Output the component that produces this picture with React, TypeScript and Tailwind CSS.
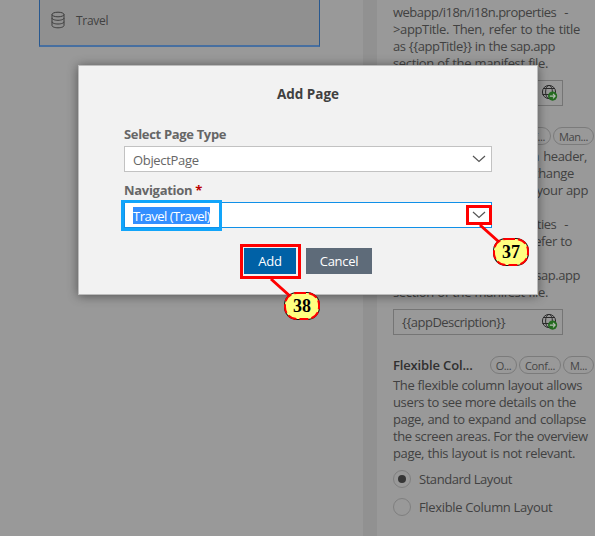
import React from "react";

function Line({ children, w }: { children: React.ReactNode; w: string }) {
  return <div className={"h-[17px] whitespace-nowrap [text-align-last:justify] " + w}>{children}</div>;
}

function Globe() {
  return (
    <svg className="block h-[18px] w-[18px] shrink-0" viewBox="0 0 18 18" fill="none">
      <g stroke="#2b2b2b" strokeWidth="1">
        <circle cx="8" cy="8" r="6.6" />
        <ellipse cx="8" cy="8" rx="3.4" ry="6.6" />
        <path d="M2.5 4.5h11M1.5 10.5h13" />
      </g>
      <circle cx="11.6" cy="12.1" r="4.6" fill="#246b20" />
      <path d="M8.8 12.1h5.2M12 9.9l2.2 2.2-2.2 2.2" stroke="#b5bdb4" strokeWidth="1.1" />
    </svg>
  );
}

function Chip({ children, w }: { children: React.ReactNode; w: string }) {
  return (
    <span className={"flex h-[18px] items-center justify-center rounded-full border border-[#7b7b7b] pt-px text-[11px] leading-none tracking-[-0.4px] text-[#454545] " + w}>
      {children}
    </span>
  );
}

function Chevron() {
  return (
    <svg className="h-[8px] w-[14px] shrink-0" viewBox="0 0 14 8" fill="none">
      <path d="M1 1l6 5.5L13 1" stroke="#555" strokeWidth="1.2" />
    </svg>
  );
}

function Radio({ label, track, on }: { label: string; track: string; on?: boolean }) {
  return (
    <div className="flex h-[28px] items-center gap-[8px]">
      <span className="flex h-[18px] w-[18px] items-center justify-center rounded-full border border-[#7f7f7f]">
        {on && <span className="h-[8px] w-[8px] rounded-full bg-[#363636]" />}
      </span>
      <span className={track}>{label}</span>
    </div>
  );
}

export default function App() {
  return (
    <div className="relative flex h-[536px] w-[595px] overflow-hidden bg-[#999999] text-[13px] leading-[17px] tracking-[-0.15px] text-[#414141] [font-family:'Open_Sans','Noto_Sans',sans-serif]">
      <div className="w-[363px] shrink-0 pl-[39px]">
        <div className="flex h-[47px] w-[281px] items-start border-b-2 border-l border-r border-b-[#476fa0] border-l-[#28588f] border-r-[#28588f] bg-[#909090] pl-[11px] pt-[11px]">
          <svg className="h-[18px] w-[14px]" viewBox="0 0 14 18" fill="none" stroke="#3d3d3d" strokeWidth="1">
            <ellipse cx="7" cy="3.5" rx="6" ry="2.3" />
            <path d="M1 3.5v11c0 1.3 2.7 2.3 6 2.3s6-1 6-2.3v-11M1 7c0 1.3 2.7 2.3 6 2.3s6-1 6-2.3M1 10.7c0 1.3 2.7 2.3 6 2.3s6-1 6-2.3" />
          </svg>
          <span className="ml-[11px] mt-px text-[12px] tracking-[-0.3px]">Travel</span>
        </div>
      </div>
      <div className="w-[14px] shrink-0 bg-[#919191]" />
      <div className="w-[218px] shrink-0 pl-[16px] pt-[4px]">
        <Line w="w-[175px] tracking-[-0.5px]">webapp/i18n/i18n.properties -</Line>
        <Line w="w-[187px] tracking-[-0.36px]">&gt;appTitle. Then, refer to the title</Line>
        <Line w="w-[162px] tracking-[-0.46px]">as {"{{appTitle}}"} in the sap.app</Line>
        <Line w="w-[155px] tracking-[-0.36px]">section of the manifest file.</Line>
        <div className="mt-[8px] flex h-[26px] w-[170px] items-center justify-between border border-[#757575] pl-[9px] pr-[3px]">
          <span>{"{{appTitle}}"}</span>
          <Globe />
        </div>
        <div className="mt-[21px] flex h-[18px] w-[201px] items-center justify-end gap-[2px]">
          <Chip w="w-[42px]">Conf...</Chip>
          <Chip w="w-[41px]">Man...</Chip>
        </div>
        <div className="mt-[3px]">
          <Line w="w-[194px] tracking-[-0.38px]">The description shown in header,</Line>
          <Line w="w-[181px] tracking-[-0.36px]">for this application. To change</Line>
          <Line w="w-[195px] tracking-[-0.36px]">the description, add it to your app</Line>
          <div className="h-[17px]">in the file</div>
          <Line w="w-[175px] tracking-[-0.5px]">webapp/i18n/i18n.properties -</Line>
          <Line w="w-[179px] tracking-[-0.36px]">&gt;appDescription. Then, refer to</Line>
          <div className="h-[17px]">it as</div>
          <Line w="w-[187px] tracking-[-0.46px]">{"{{appDescription}}"} in the sap.app</Line>
          <Line w="w-[155px] tracking-[-0.36px]">section of the manifest file.</Line>
        </div>
        <div className="mt-[8px] flex h-[26px] w-[170px] items-center justify-between border border-[#757575] pl-[8px] pr-[3px]">
          <span className="pt-px tracking-[-0.5px]">{"{{appDescription}}"}</span>
          <Globe />
        </div>
        <div className="mt-[21px] flex h-[18px] w-[201px] items-center gap-[2px]">
          <span className="mr-auto font-semibold tracking-[-0.15px] text-[#303030]">Flexible Col...</span>
          <Chip w="w-[27px]">O...</Chip>
          <Chip w="w-[42px]">Conf...</Chip>
          <Chip w="w-[31px]">M...</Chip>
        </div>
        <div className="mt-[3px]">
          <Line w="w-[189px] tracking-[-0.36px]">The flexible column layout allows</Line>
          <Line w="w-[183px] tracking-[-0.36px]">users to see more details on the</Line>
          <Line w="w-[193px] tracking-[-0.4px]">page, and to expand and collapse</Line>
          <Line w="w-[194px] tracking-[-0.38px]">the screen areas. For the overview</Line>
          <Line w="w-[182px] tracking-[-0.36px]">page, this layout is not relevant.</Line>
        </div>
        <div className="mt-[3px]">
          <Radio label="Standard Layout" track="tracking-[-0.45px]" on />
          <Radio label="Flexible Column Layout" track="tracking-[-0.34px]" />
        </div>
      </div>

      <div className="absolute left-[78px] top-[65px] flex h-[230px] w-[460px] flex-col border border-[#bcbcbc] bg-[#f2f2f2] px-[45px] text-[#666] shadow-[0_1px_10px_rgba(0,0,0,0.45)]">
        <div className="mt-[20px] text-center text-[13.5px] font-bold tracking-[0px] text-[#404040]">Add Page</div>
        <div className="mt-[23px] font-bold tracking-[-0.33px]">Select Page Type</div>
        <div className="mt-[3px] flex h-[26px] items-center justify-between border border-[#c2c2c2] bg-white pl-[8px] pr-[5px]">
          <span className="pt-[2px] tracking-[-0.33px]">ObjectPage</span>
          <Chevron />
        </div>
        <div className="mt-[10px] font-bold tracking-[-0.3px]">Navigation <span className="text-[#b00]">*</span></div>
        <div className="mt-[3px] flex h-[26px] items-center justify-between border border-[#1090e8] bg-white pl-[8px] pr-[5px]">
          <span className="h-[17px] w-[77px] whitespace-nowrap bg-[#338fff] leading-[18px] tracking-[-0.5px] text-white">Travel (Travel)</span>
          <Chevron />
        </div>
        <div className="mt-[20px] flex justify-center gap-[10px] text-white">
          <button className="h-[26px] w-[52px] bg-[#0061a6]">Add</button>
          <button className="h-[26px] w-[66px] bg-[#5e6b79] tracking-[-0.3px]">Cancel</button>
        </div>
      </div>

      <div className="absolute left-[121px] top-[200px] h-[31px] w-[101px] border-[3px] border-[#12a5fa]" />
      <div className="absolute left-[466px] top-[205px] h-[20px] w-[26px] border-[3px] border-[#f00]" />
      <div className="absolute left-[240px] top-[244px] h-[35px] w-[61px] border-[3px] border-[#f00]" />
      <svg className="absolute left-0 top-0 h-[536px] w-[595px]" viewBox="0 0 595 536" fill="none">
        <path d="M480 225l19 17M271 279l20 18" stroke="#f00" strokeWidth="3" />
        <g fill="#ffff80" strokeWidth="2">
          <rect x="494" y="239" width="34" height="26" rx="12" stroke="#111" />
          <rect x="494" y="239" width="34" height="26" rx="12" stroke="#f00" strokeDasharray="9 3" />
          <rect x="285" y="293" width="34" height="26" rx="12" stroke="#111" />
          <rect x="285" y="293" width="34" height="26" rx="12" stroke="#f00" strokeDasharray="9 3" />
        </g>
      </svg>
      <div className="absolute left-[493px] top-[238px] w-[36px] text-center text-[18px] font-bold leading-[28px] tracking-normal text-black [font-family:'Liberation_Serif',serif]">37</div>
      <div className="absolute left-[284px] top-[292px] w-[36px] text-center text-[18px] font-bold leading-[28px] tracking-normal text-black [font-family:'Liberation_Serif',serif]">38</div>
    </div>
  );
}
